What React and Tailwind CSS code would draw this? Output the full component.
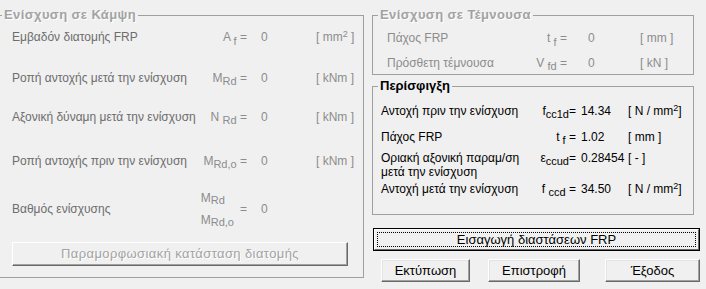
import React from "react";

const grey = "text-[#6d6d6d]";
const light = "text-[#8c8c8c]";

const Sub = ({ children, down = "top-[4px]" }) => (
  <span className={`relative ${down} text-[11px]`}>{children}</span>
);

const LeftRow = ({ label, sym, value = "0", unit, className = "" }) => (
  <div className={`grid grid-cols-[190px_45px_69px_1fr] items-center h-4 leading-4 whitespace-nowrap ${className}`}>
    <span className={grey}>{label}</span>
    <span className={`text-right ${light}`}>{sym}</span>
    <span className={`pl-[14px] ${light}`}>{value}</span>
    <span className={light}>{unit}</span>
  </div>
);

const ShearRow = ({ label, sym, value = "0", unit, className = "" }) => (
  <div className={`grid grid-cols-[120px_60px_73px_1fr] items-center h-4 leading-4 pl-[9px] whitespace-nowrap ${className}`}>
    <span className={light}>{label}</span>
    <span className={`text-right ${light}`}>{sym}</span>
    <span className={`pl-[21px] ${light}`}>{value}</span>
    <span className={light}>{unit}</span>
  </div>
);

const ConfRow = ({ label, sym, value, unit, className = "" }) => (
  <div className={`grid grid-cols-[148px_47px_52px_1fr] items-center pl-[3px] text-black whitespace-nowrap ${className}`}>
    <span>{label}</span>
    <span className="text-right">{sym}</span>
    <span className="pl-[5px]">{value}</span>
    <span>{unit}</span>
  </div>
);

const WinButton = ({ children, className = "" }) => (
  <button className={`h-[23px] bg-[#f0f0f0] border border-t-white border-l-white border-r-[#696969] border-b-[#696969] shadow-[inset_-1px_-1px_0_#a0a0a0,inset_1px_1px_0_#e3e3e3] text-[13px] text-black ${className}`}>
    {children}
  </button>
);

export default function App() {
  return (
    <div className="w-[706px] h-[289px] bg-[#f0f0f0] flex overflow-hidden text-[12px] font-['Liberation_Sans',Arial,sans-serif]">
      <fieldset className="ml-[-4px] mt-[7px] w-[368px] h-[271px] border border-[#a0a0a0] px-[5px] shrink-0">
        <legend className="px-[2px] h-4 leading-4 text-[13px] font-bold tracking-[0.4px] text-[#a3a3a3] [text-shadow:1px_1px_0_#fff]">
          Ενίσχυση σε Κάμψη
        </legend>
        <div className="pl-[10px]">
          <LeftRow
            className="mt-[6px]"
            label="Εμβαδόν διατομής FRP"
            sym={<>A <Sub>f</Sub> =</>}
            unit={<>[ mm<sup className="text-[9px]">2</sup> ]</>}
          />
          <LeftRow className="mt-[25px]" label="Ροπή αντοχής μετά την ενίσχυση" sym={<>M<Sub down="top-[3px]">Rd</Sub> =</>} unit="[ kNm ]" />
          <LeftRow className="mt-[23px]" label="Αξονική δύναμη μετά την ενίσχυση" sym={<>N <Sub down="top-[3px]">Rd</Sub> =</>} unit="[ kNm ]" />
          <LeftRow className="mt-[28px]" label="Ροπή αντοχής πριν την ενίσχυση" sym={<>M<Sub down="top-[3px]">Rd,o</Sub> =</>} unit="[ kNm ]" />
          <div className="mt-[18px] grid grid-cols-[190px_45px_69px_1fr] items-center h-[38px] whitespace-nowrap">
            <span className={grey}>Βαθμός ενίσχυσης</span>
            <div className={`flex flex-col items-end ${light}`}>
              <div className="flex items-center gap-[6px]">
                <div className="flex flex-col leading-[22px]">
                  <span>M<Sub down="top-[2px]">Rd</Sub></span>
                  <span>M<Sub down="top-[2px]">Rd,o</Sub></span>
                </div>
                <span>=</span>
              </div>
            </div>
            <span className={`pl-[14px] ${light}`}>0</span>
            <span />
          </div>
          <button
            disabled
            className="mt-[17px] w-[336px] h-[24px] bg-[#f0f0f0] border border-t-white border-l-white border-r-[#696969] border-b-[#696969] shadow-[inset_-1px_-1px_0_#a0a0a0] text-[13px] tracking-[0.4px] text-[#a3a3a3] [text-shadow:1px_1px_0_#fff]"
          >
            Παραμορφωσιακή κατάσταση διατομής
          </button>
        </div>
      </fieldset>

      <div className="ml-[8px] flex flex-col w-[334px]">
        <fieldset className="mt-[7px] w-[322px] h-[68px] border border-[#a0a0a0] px-[5px]">
          <legend className="px-[2px] h-4 leading-4 text-[13px] font-bold tracking-[0.4px] text-[#a3a3a3] [text-shadow:1px_1px_0_#fff]">
            Ενίσχυση σε Τέμνουσα
          </legend>
          <ShearRow className="mt-[7px]" label="Πάχος FRP" sym={<>t <Sub>f</Sub> =</>} unit="[ mm ]" />
          <ShearRow className="mt-[9px]" label="Πρόσθετη τέμνουσα" sym={<>V <Sub down="top-[3px]">fd</Sub> =</>} unit="[ kN ]" />
        </fieldset>

        <fieldset className="mt-[3px] w-[322px] h-[137px] border border-[#a0a0a0] px-[5px]">
          <legend className="px-[2px] h-4 leading-4 text-[13px] font-bold text-black">Περίσφιγξη</legend>
          <ConfRow
            className="mt-[9px] h-4 leading-4"
            label="Αντοχή πριν την ενίσχυση"
            sym={<>f<Sub down="top-[3px]">cc1d</Sub>=</>}
            value="14.34"
            unit={<>[ N / mm<sup className="text-[9px]">2</sup>]</>}
          />
          <ConfRow className="mt-[10px] h-4 leading-4" label="Πάχος FRP" sym={<>t<Sub down="top-[3px]"> f</Sub> =</>} value="1.02" unit="[ mm ]" />
          <ConfRow
            className="mt-[6px] leading-[14px] items-start"
            label={<>Οριακή αξονική παραμ/ση<br />μετά την ενίσχυση</>}
            sym={<>ε<Sub down="top-[3px]">ccud</Sub>=</>}
            value="0.28454"
            unit="[ - ]"
          />
          <ConfRow
            className="mt-[2px] h-4 leading-4"
            label="Αντοχή μετά την ενίσχυση"
            sym={<>f <Sub down="top-[3px]">ccd</Sub> =</>}
            value="34.50"
            unit={<>[ N / mm<sup className="text-[9px]">2</sup>]</>}
          />
        </fieldset>

        <div className="mt-[13px] ml-[1px] w-[327px] h-[23px] border border-black">
          <div className="h-full border border-t-white border-l-white border-r-[#696969] border-b-[#696969] p-[2px]">
            <div className="h-full border border-dotted border-black flex items-center justify-center text-[13px] text-black">
              Εισαγωγή διαστάσεων FRP
            </div>
          </div>
        </div>

        <div className="mt-[8px] flex">
          <WinButton className="ml-[9px] w-[89px]">Εκτύπωση</WinButton>
          <WinButton className="ml-[18px] w-[92px]">Επιστροφή</WinButton>
          <WinButton className="ml-[25px] w-[95px]">Έξοδος</WinButton>
        </div>
      </div>
    </div>
  );
}
